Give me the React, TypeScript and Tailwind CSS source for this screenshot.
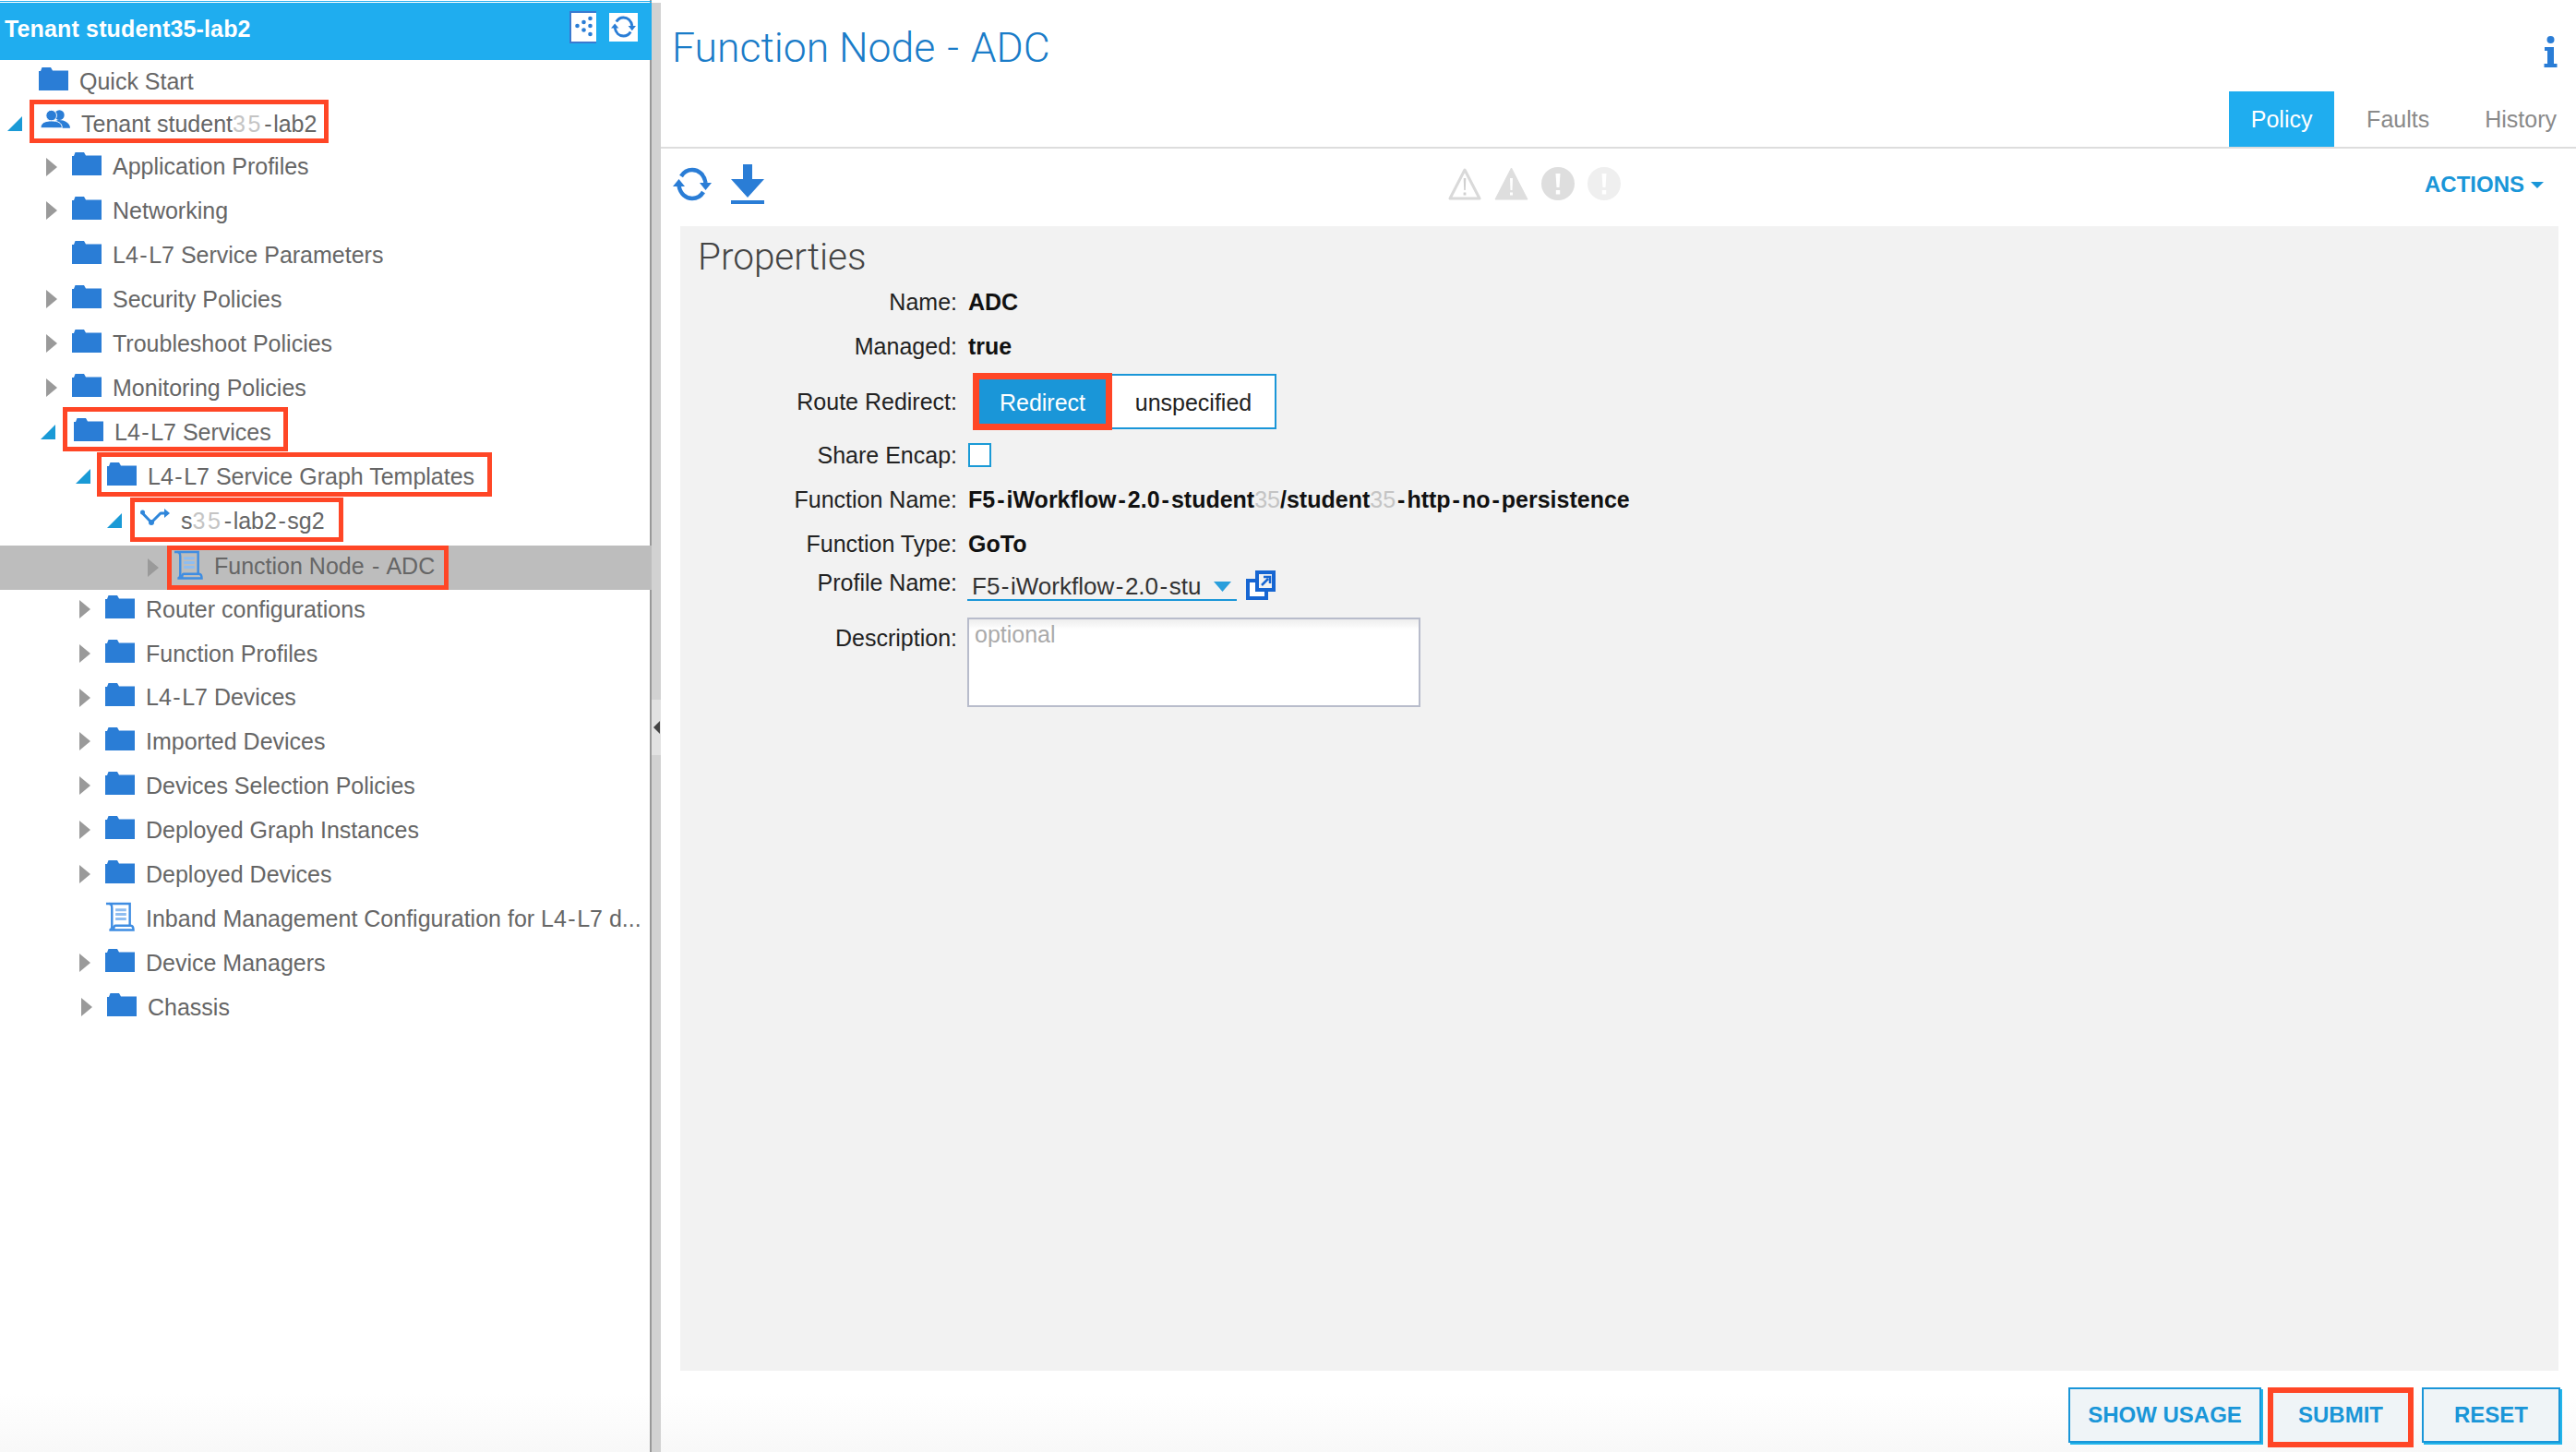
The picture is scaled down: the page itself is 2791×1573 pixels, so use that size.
import type { ReactNode } from "react";

const BLUE = "#2a7dd6";

function Folder() {
  return (
    <svg width="32" height="25" viewBox="0 0 32 25" className="mb-[6px] shrink-0">
      <path d="M0 4 H2 L3.5 0 H13 L15 3.5 H32 V25 H0 Z" fill={BLUE} />
    </svg>
  );
}

function Users() {
  return (
    <svg width="32" height="20" viewBox="0 0 33 20" className="mb-[10px] shrink-0" fill={BLUE}>
      <circle cx="21" cy="5.5" r="5.5" />
      <path d="M13 20 C13 13 17 11 21 11 C26 11 33 14 33 20 Z" />
      <circle cx="12" cy="6" r="6" stroke="#fff" strokeWidth="1" />
      <path d="M0 20 C0 14 5 12 12 12 C19 12 24 14 24 20 Z" stroke="#fff" strokeWidth="1" />
    </svg>
  );
}

function GraphIcon() {
  return (
    <svg width="32" height="20" viewBox="0 0 32 20" className="mb-[6px] shrink-0" fill="none">
      <path d="M1.5 4 L12 15 L22 5 H27" stroke="#2f86da" strokeWidth="3" strokeLinejoin="round" />
      <path d="M26 0 L32 5 L26 10 Z" fill="#2f86da" />
      <circle cx="12" cy="15" r="3" fill="#2f86da" />
      <circle cx="2.5" cy="4" r="2.5" fill="#2f86da" />
    </svg>
  );
}

function ScrollIcon() {
  return (
    <svg width="32" height="32" viewBox="0 0 32 33" className="mb-[4px] shrink-0" fill="none" stroke="#3f8de2" strokeWidth="2.5">
      <path d="M0.5 2 H27 V26" />
      <path d="M4 2 C7 2 7 5 7 7 V27 C7 29 6 31.5 4 31.5 H31 C31 29 30 26.5 28 26.5 H11 C9.5 26.5 9 29 9 31" />
      <path d="M11 9 H23 M11 14 H23 M11 19 H23" stroke="#8fbdf0" strokeWidth="3" />
    </svg>
  );
}

function Refresh({ className, color = BLUE }: { className: string; color?: string }) {
  return (
    <svg viewBox="0 0 42 37" className={className} fill="none">
      <path d="M9 10 C12 5 16 3 21 3 C28 3 34 8 35.5 17" stroke={color} strokeWidth="4.5" />
      <path d="M33 27 C30 32 26 34 21 34 C14 34 8 29 6.5 20" stroke={color} strokeWidth="4.5" />
      <path d="M29 17 H42 L35.5 25 Z M0 21 H13 L6.5 13 Z" fill={color} />
    </svg>
  );
}

function Download() {
  return (
    <svg width="36" height="43" viewBox="0 0 36 43" className="shrink-0" fill={BLUE}>
      <path d="M13 0 H23 V16 H36 L18 36 L0 16 H13 Z" />
      <rect x="0" y="39" width="36" height="4" />
    </svg>
  );
}

function WarnOutline() {
  return (
    <svg width="36" height="36" viewBox="0 0 36 36">
      <path d="M18 3 L34 34 H2 Z" fill="none" stroke="#d9d9d9" strokeWidth="3" strokeLinejoin="round" />
      <path d="M16.7 12 H19.3 L18.8 25 H17.2 Z M16.6 27.5 H19.4 V30.5 H16.6 Z" fill="#d0d0d0" />
    </svg>
  );
}

function WarnFilled() {
  return (
    <svg width="37" height="36" viewBox="0 0 37 36">
      <path d="M18.5 1 L36 35 H1 Z" fill="#dedede" stroke="#dedede" strokeLinejoin="round" />
      <path d="M17 12 H20 L19.5 25 H17.5 Z M17 27.5 H20 V30.5 H17 Z" fill="#fff" />
    </svg>
  );
}

function Bang({ fill }: { fill: string }) {
  return (
    <svg width="36" height="36" viewBox="0 0 36 36">
      <circle cx="18" cy="18" r="18" fill={fill} />
      <path d="M15.5 7 H20.5 L19.5 22 H16.5 Z M15.8 25 H20.2 V29.5 H15.8 Z" fill="#fff" />
    </svg>
  );
}

function LinkIcon() {
  return (
    <svg width="32" height="32" viewBox="0 0 32 32" className="shrink-0">
      <rect x="2" y="11" width="20" height="19" fill="#fff" stroke="#1766d2" strokeWidth="4" />
      <rect x="12" y="2" width="18" height="19" fill="#f2f2f2" stroke="#1766d2" strokeWidth="4" />
      <path d="M17 16 L24 9 M19 7 H26 V14" fill="none" stroke="#1766d2" strokeWidth="2.5" />
    </svg>
  );
}

function Expanded() {
  return (
    <svg width="16" height="16" viewBox="0 0 16 16" className="shrink-0">
      <path d="M16 0 V16 H0 Z" fill="#1a9ad6" />
    </svg>
  );
}

function Collapsed() {
  return (
    <svg width="12" height="20" viewBox="0 0 12 20" className="shrink-0">
      <path d="M0 0 L12 10 L0 20 Z" fill="#9a9a9a" />
    </svg>
  );
}

// the digits are smudged out in the screenshot
function Smudge({ className = "" }: { className?: string }) {
  return <span className={`font-normal text-[#c4c4c4] ${className}`}>35</span>;
}

function Dash({ className = "mx-[1.5px]" }: { className?: string }) {
  return <span className={className}>-</span>;
}

function dashed(text: string, className?: string) {
  return text.split("-").map((part, i) => (
    <span key={i}>
      {i > 0 && <Dash className={className} />}
      {part}
    </span>
  ));
}

type NodeRow = {
  label: ReactNode;
  rowClass: string;
  slotClass: string;
  arrow?: "open" | "closed";
  icon?: "folder" | "users" | "graph" | "scroll";
  boxClass?: string;
  textClass?: string;
};

const rows: NodeRow[] = [
  { label: "Quick Start", rowClass: "h-[46px] pl-[8px]", slotClass: "w-[34px]" },
  {
    label: <>Tenant student<Smudge className="tracking-[2.5px]" /><Dash />lab2</>,
    rowClass: "h-[46px] pl-[8px]",
    slotClass: "w-[24px]",
    arrow: "open",
    icon: "users",
    boxClass: "h-[47px] mb-[6px] pt-[6px] pl-[7px] pr-[8px]",
  },
  { label: "Application Profiles", rowClass: "h-[47px] pl-[50px]", slotClass: "w-[28px]", arrow: "closed" },
  { label: "Networking", rowClass: "h-[48px] pl-[50px]", slotClass: "w-[28px]", arrow: "closed" },
  { label: "L4-L7 Service Parameters", rowClass: "h-[48px] pl-[50px]", slotClass: "w-[28px]" },
  { label: "Security Policies", rowClass: "h-[48px] pl-[50px]", slotClass: "w-[28px]", arrow: "closed" },
  { label: "Troubleshoot Policies", rowClass: "h-[48px] pl-[50px]", slotClass: "w-[28px]", arrow: "closed" },
  { label: "Monitoring Policies", rowClass: "h-[48px] pl-[50px]", slotClass: "w-[28px]", arrow: "closed" },
  {
    label: "L4-L7 Services",
    rowClass: "h-[48px] pl-[44px]",
    slotClass: "w-[24px]",
    arrow: "open",
    boxClass: "h-[48px] mb-[6px] pt-[6px] pl-[7px] pr-[13px]",
  },
  {
    label: "L4-L7 Service Graph Templates",
    rowClass: "h-[48px] pl-[82px]",
    slotClass: "w-[23px]",
    arrow: "open",
    boxClass: "h-[48px] mb-[4px] pt-[4px] pl-[6px] pr-[14px]",
  },
  {
    label: <>s<Smudge className="tracking-[2.5px]" /><Dash />lab2<Dash />sg2</>,
    rowClass: "h-[48px] pl-[116px]",
    slotClass: "w-[25px]",
    arrow: "open",
    icon: "graph",
    boxClass: "h-[48px] mb-[2px] pt-[2px] pl-[6px] pr-[15px]",
  },
  {
    label: "Function Node - ADC",
    rowClass: "h-[48px] mt-[3px] pl-[160px] bg-[#bdbdbd] mr-[-2px]",
    slotClass: "w-[21px]",
    arrow: "closed",
    icon: "scroll",
    boxClass: "h-[48px] pb-[3px] pl-[2px] pr-[10px]",
    textClass: "text-[#666]",
  },
  { label: "Router configurations", rowClass: "h-[42px] mb-[3px] pl-[86px]", slotClass: "w-[28px]", arrow: "closed" },
  { label: "Function Profiles", rowClass: "h-[48px] pl-[86px]", slotClass: "w-[28px]", arrow: "closed" },
  { label: "L4-L7 Devices", rowClass: "h-[47px] pl-[86px]", slotClass: "w-[28px]", arrow: "closed" },
  { label: "Imported Devices", rowClass: "h-[48px] pl-[86px]", slotClass: "w-[28px]", arrow: "closed" },
  { label: "Devices Selection Policies", rowClass: "h-[48px] pl-[86px]", slotClass: "w-[28px]", arrow: "closed" },
  { label: "Deployed Graph Instances", rowClass: "h-[48px] pl-[86px]", slotClass: "w-[28px]", arrow: "closed" },
  { label: "Deployed Devices", rowClass: "h-[48px] pl-[86px]", slotClass: "w-[28px]", arrow: "closed" },
  { label: "Inband Management Configuration for L4-L7 d...", rowClass: "h-[48px] pl-[86px]", slotClass: "w-[28px]", icon: "scroll" },
  { label: "Device Managers", rowClass: "h-[48px] pl-[86px]", slotClass: "w-[28px]", arrow: "closed" },
  { label: "Chassis", rowClass: "h-[48px] pl-[88px]", slotClass: "w-[28px]", arrow: "closed" },
];

function TreeRow({ row }: { row: NodeRow }) {
  const icon =
    row.icon === "users" ? <Users /> : row.icon === "graph" ? <GraphIcon /> : row.icon === "scroll" ? <ScrollIcon /> : <Folder />;
  const body = (
    <>
      {icon}
      <span className={`ml-[12px] whitespace-nowrap ${row.textClass ?? ""}`}>
        {typeof row.label === "string" ? dashed(row.label) : row.label}
      </span>
    </>
  );
  return (
    <div className={`flex items-center ${row.rowClass}`}>
      <div className={`flex shrink-0 items-center ${row.slotClass}`}>
        {row.arrow === "open" && <Expanded />}
        {row.arrow === "closed" && <Collapsed />}
      </div>
      {row.boxClass ? (
        <div className={`flex shrink-0 items-center border-[5px] border-[#ff4626] ${row.boxClass}`}>{body}</div>
      ) : (
        body
      )}
    </div>
  );
}

function Sidebar() {
  return (
    <aside className="flex w-[706px] shrink-0 flex-col border-r-2 border-[#999] pt-[1px] text-[25px] leading-none text-[#666]">
      <div className="mr-[-2px] h-[1px] bg-[#1fadef]" />
      <div className="mr-[-2px] mt-[1px] flex h-[62px] shrink-0 items-center justify-between bg-[#1fadef] pl-[5px] pr-[15px] text-white">
        <span className="pb-[6px] text-[25px] font-bold tracking-[0.15px]">Tenant student35-lab2</span>
        <div className="mb-[10px] flex items-center gap-[14px]">
          <div className="flex h-[35px] w-[29px] items-center justify-center border-y-2 border-l-2 border-[#3a7ad0] bg-white">
            <svg width="20" height="24" viewBox="0 0 20 24" fill="#2a7dd6">
              <circle cx="2.5" cy="11" r="2.3" />
              <circle cx="9.5" cy="7" r="2.3" />
              <circle cx="9.5" cy="15.5" r="2.3" />
              <circle cx="16.5" cy="3" r="2.3" />
              <circle cx="16.5" cy="11" r="2.3" />
              <circle cx="16.5" cy="20" r="2.3" />
            </svg>
          </div>
          <div className="flex h-[31px] w-[31px] items-center justify-center bg-white">
            <Refresh className="h-[24px] w-[27px]" />
          </div>
        </div>
      </div>
      {rows.map((row, i) => (
        <TreeRow key={i} row={row} />
      ))}
    </aside>
  );
}

function FormRow({ label, rowClass, labelClass, children }: { label: string; rowClass: string; labelClass?: string; children: ReactNode }) {
  return (
    <div className={`flex ${rowClass}`}>
      <div className={`w-[300px] shrink-0 text-right text-[#222] ${labelClass ?? ""}`}>{label}</div>
      <div className="ml-[12px] flex items-center font-bold text-[#111]">{children}</div>
    </div>
  );
}

function FooterButton({ label }: { label: string }) {
  return (
    <button className="flex h-[60px] w-full items-center justify-center whitespace-nowrap border-2 border-[#1a96d8] bg-[#eff4f7] text-[24px] font-bold text-[#1a96d8] shadow-[2px_2px_0_#22b5ea]">
      {label}
    </button>
  );
}

export default function App() {
  return (
    <div className="flex h-screen w-full overflow-hidden bg-linear-to-b from-white from-[96%] to-[#f8f8f8] font-['Liberation_Sans',Arial,sans-serif]">
      <Sidebar />

      {/* drag handle between the tree and the detail pane */}
      <div className="mt-[3px] flex w-[10px] shrink-0 items-center justify-center bg-[#d2d2d2]">
        <div className="flex h-[60px] w-full items-center justify-center bg-[#e2e2e2]">
          <svg width="7" height="14" viewBox="0 0 7 14">
            <path d="M7 0 V14 L0 7 Z" fill="#444" />
          </svg>
        </div>
      </div>

      <main className="flex min-w-0 flex-1 flex-col">
        <div className="flex h-[161px] shrink-0 justify-between border-b-2 border-[#ddd] pr-[4px]">
          <h1 className="pl-[12px] pt-[30px] font-['Roboto',sans-serif] text-[44.5px] font-light leading-none text-[#1a7cc8]">
            Function Node <Dash className="mx-[2px]" /> ADC
          </h1>
          <div className="flex flex-col items-end">
            <svg width="15" height="34" viewBox="0 0 15 34" fill="#2a7dd6" className="mr-[16px] mt-[39px] shrink-0">
              <circle cx="7.5" cy="4" r="4" />
              <path d="M1 12 H11 V30 H14.5 V34 H0.5 V30 H4 V16 H1 Z" />
            </svg>
            <div className="mt-auto flex h-[60px] items-center pr-[17px] text-[25px] text-[#8a8a8a]">
              <div className="flex h-full w-[114px] items-center justify-center bg-[#1fadef] pt-[2px] text-white">Policy</div>
              <span className="ml-[35px] pt-[2px]">Faults</span>
              <span className="ml-[60px] pt-[2px]">History</span>
            </div>
          </div>
        </div>

        <div className="flex h-[84px] shrink-0 items-center pb-[8px] pl-[13px] pr-[35px]">
          <Refresh className="h-[37px] w-[42px] shrink-0" />
          <div className="ml-[21px]">
            <Download />
          </div>
          <div className="ml-[741px] flex items-center gap-[14px]">
            <WarnOutline />
            <WarnFilled />
            <Bang fill="#dedede" />
            <Bang fill="#efefef" />
          </div>
          <div className="ml-auto flex items-center gap-[7px] pt-[2px] text-[24px] font-bold text-[#1a96d8]">
            ACTIONS
            <svg width="14" height="7" viewBox="0 0 14 7">
              <path d="M0 0 H14 L7 7 Z" fill="#1a96d8" />
            </svg>
          </div>
        </div>

        <section className="ml-[21px] mr-[19px] min-h-0 flex-1 bg-[#f2f2f2] text-[25px] leading-[28px]">
          <h2 className="h-[58px] pl-[19px] pt-[13px] font-['Roboto',sans-serif] text-[40.5px] font-light leading-none text-[#444]">
            Properties
          </h2>
          <FormRow label="Name:" rowClass="h-[48px] items-center">ADC</FormRow>
          <FormRow label="Managed:" rowClass="h-[48px] items-center">true</FormRow>
          <FormRow label="Route Redirect:" rowClass="h-[71px] items-center">
            <div className="ml-[5px] flex items-center pt-[1px] font-normal">
              <div className="z-10 flex h-[62px] w-[151px] items-center justify-center border-[7px] border-[#ff4626] bg-[#1a96d8] pt-[2px] text-white">
                Redirect
              </div>
              <div className="flex h-[60px] w-[178px] items-center justify-center border-y-2 border-r-2 border-[#1a96d8] bg-white pt-[2px] text-[#222]">
                unspecified
              </div>
            </div>
          </FormRow>
          <FormRow label="Share Encap:" rowClass="h-[46px] items-center">
            <div className="h-[26px] w-[25px] border-2 border-[#1a9ad6] bg-white" />
          </FormRow>
          <FormRow label="Function Name:" rowClass="h-[49px] items-center">
            <span className="whitespace-nowrap">
              {dashed("F5-iWorkflow-2.0-student", "mx-[2px]")}
              <Smudge />/student<Smudge />
              {dashed("-http-no-persistence", "mx-[2px]")}
            </span>
          </FormRow>
          <FormRow label="Function Type:" rowClass="h-[48px] items-center">GoTo</FormRow>
          <FormRow label="Profile Name:" rowClass="h-[46px] items-center" labelClass="mb-[10px]">
            <div className="-ml-[1px] flex h-full w-[292px] items-center justify-between border-b-2 border-[#1a96d8] pl-[5px] pr-[6px] text-[26px] font-normal text-[#333]">
              <span>{dashed("F5-iWorkflow-2.0-stu")}</span>
              <svg width="19" height="11" viewBox="0 0 19 11">
                <path d="M0 0 H19 L9.5 11 Z" fill="#2a9fdc" />
              </svg>
            </div>
            <div className="mb-[4px] ml-[10px]">
              <LinkIcon />
            </div>
          </FormRow>
          <FormRow label="Description:" rowClass="mt-[10px] h-[97px] items-start" labelClass="pt-[8px]">
            <textarea
              readOnly
              placeholder="optional"
              className="-ml-[1px] h-[97px] w-[491px] resize-none border-2 border-[#b8bccb] bg-linear-to-b from-[#ededed] to-white to-[12%] px-[6px] py-[2px] font-normal placeholder:text-[#aaa]"
            />
          </FormRow>
        </section>

        <footer className="flex h-[88px] shrink-0 items-start justify-end pr-[17px] pt-[18px]">
          <div className="w-[209px]">
            <FooterButton label="SHOW USAGE" />
          </div>
          <div className="ml-[7px] flex h-[65px] w-[158px] items-center justify-center border-[6px] border-[#ff4626] bg-[#eff4f7] pb-[5px] text-[24px] font-bold text-[#1a96d8]">
            SUBMIT
          </div>
          <div className="ml-[9px] w-[150px]">
            <FooterButton label="RESET" />
          </div>
        </footer>
      </main>
    </div>
  );
}
